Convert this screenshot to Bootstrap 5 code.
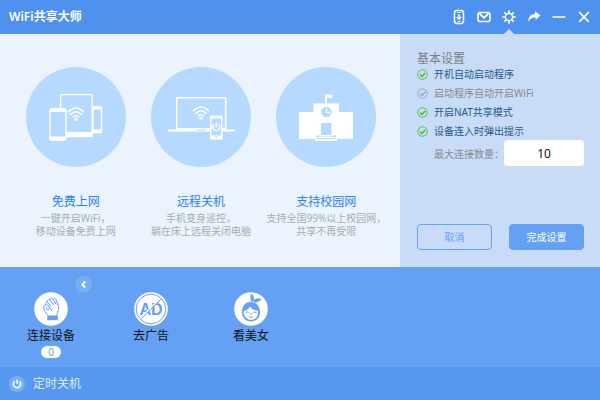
<!DOCTYPE html>
<html lang="zh-CN">
<head>
<meta charset="utf-8">
<meta name="viewport" content="width=device-width, initial-scale=1">
<title>WiFi共享大师</title>
<link rel="stylesheet" href="https://cdn.jsdelivr.net/npm/bootstrap@5.3.0/dist/css/bootstrap.min.css">
<style>
body{font-family:"Noto Sans","Noto Sans CJK SC",sans-serif;font-size:12px;line-height:16px;background:#64a1f4;color:#111}
svg{display:block}
.titlebar{background:#4f92ee;height:34px;padding:0 4px 0 9px}
.app-name{font-size:12px;line-height:16px;font-weight:600}
.tool{width:25px;height:34px}
.tool.active::after{content:"";position:absolute;left:50%;bottom:0;transform:translateX(-50%);border:5px solid transparent;border-top:0;border-bottom-color:#c9dcf7}
.stage{background:#ebf3fc}
.features{padding:33px 11px 28px 13px}
.disc{width:100px;height:100px;margin-bottom:27px}
.feature-title{font-size:12px;line-height:16px;font-weight:400;color:#2b82ee;margin-bottom:2px}
.feature-text{font-size:10px;line-height:13px;color:#aaadb0}
.settings{background:#c9dcf7;padding:17px 16px 17px 17px}
.settings-title{font-size:12px;line-height:16px;font-weight:400;color:#7b7f86}
.option{font-size:10px;line-height:15px;height:15px;margin-bottom:4px;color:#245a8c}
.option.off{color:#868b93}
.option .form-check-input{width:11px;height:11px;margin:0 6px 0 0;border:0;border-radius:50%;background:center/11px 11px no-repeat transparent}
.option .form-check-input,.option .form-check-input:checked{background-color:transparent}
.option .form-check-input{background-image:url("data:image/svg+xml,%3Csvg xmlns='http://www.w3.org/2000/svg' viewBox='0 0 11 11' fill='none' stroke='%239ca3ad'%3E%3Ccircle cx='5.5' cy='5.5' r='4.8'/%3E%3Cpath d='M3 5.5l2 2 3.2-3.6' stroke-width='1.5'/%3E%3C/svg%3E")}
.option .form-check-input:checked{background-image:url("data:image/svg+xml,%3Csvg xmlns='http://www.w3.org/2000/svg' viewBox='0 0 11 11' fill='none' stroke='%2344bd22'%3E%3Ccircle cx='5.5' cy='5.5' r='4.8'/%3E%3Cpath d='M3 5.5l2 2 3.2-3.6' stroke-width='1.5'/%3E%3C/svg%3E")}
.limit{padding-top:1px}
.limit-label{font-size:10px;line-height:15px;color:#868b93;padding-top:7px}
.limit-input{width:80px;height:26px;font-size:12px;line-height:16px;border-radius:4px;color:#111}
.action{width:75px;height:26px;font-size:10px;line-height:14px;border-radius:4px;border:1px solid #64a1f4}
.action-cancel,.action-cancel:hover{color:#64a1f4}
.action-ok,.action-ok:hover{background:#64a1f4;color:#fff}
.devices{min-height:100px;padding:25px 0 0 1px}
.device{width:100px;color:#111;font-size:12px;line-height:16px}
.device:hover{color:#111}
.device svg{margin-bottom:2px}
.count{width:20px;height:12px;margin-top:2px;font-size:10px;line-height:12px;color:#64a1f4}
.collapse-btn{left:75px;top:9px}
.statusbar{background:#5698f0;height:33px;padding:0 9px;color:#dfebfd}
.timer-btn{font-size:12px;line-height:16px}
</style>
</head>
<body class="d-flex flex-column min-vh-100">
<svg class="d-none" aria-hidden="true">
  <symbol id="wifi" viewBox="0 0 18 15">
    <g fill="none" stroke="#fff" stroke-width="1.6"><path d="M1 5.8Q9-2.8 17 5.8"/><path d="M3.5 8.3Q9 2.2 14.5 8.3"/><path d="M6 10.7Q9 7.2 12 10.7"/></g><circle cx="9" cy="12.8" r="1.7" fill="#fff"/>
  </symbol>
</svg>
<header class="titlebar d-flex align-items-center justify-content-between text-white">
  <h1 class="app-name mb-0">WiFi共享大师</h1>
  <nav class="d-flex" aria-label="窗口">
    <button type="button" class="tool btn p-0 border-0 rounded-0 d-flex align-items-center justify-content-center" aria-label="手机版">
      <svg width="16" height="16" viewBox="0 0 16 16" fill="none" stroke="#fff"><rect x="3.500" y="1.500" width="9" height="13" rx="2.400" stroke-width="1.500"/><path d="M6 3.500h4M6.500 12.500h3" stroke-width=".8"/><path d="M8 5v5M5.800 7.900L8 10.200l2.200-2.300" stroke-width="1.300"/></svg>
    </button>
    <button type="button" class="tool btn p-0 border-0 rounded-0 d-flex align-items-center justify-content-center" aria-label="消息">
      <svg width="16" height="16" viewBox="0 0 16 16" fill="none" stroke="#fff"><rect x="2" y="3.500" width="12" height="9" rx="2" stroke-width="1.600"/><path d="M3.500 4.500L8 8.800l4.500-4.300" stroke-width="1.800"/></svg>
    </button>
    <button type="button" class="tool active btn p-0 border-0 rounded-0 d-flex align-items-center justify-content-center position-relative" aria-label="设置">
      <svg width="16" height="16" viewBox="0 0 16 16" fill="none" stroke="#fff"><circle cx="8" cy="8" r="3.600" stroke-width="1.500"/><path d="M8 1.300v2.700M8 12v2.700M1.300 8H4M12 8h2.700M3.300 3.300l1.900 1.900M10.800 10.800l1.900 1.900M12.700 3.300l-1.900 1.900M5.200 10.800l-1.900 1.900" stroke-width="1.700"/></svg>
    </button>
    <button type="button" class="tool btn p-0 border-0 rounded-0 d-flex align-items-center justify-content-center" aria-label="分享">
      <svg width="16" height="16" viewBox="0 0 16 16" fill="#fff"><path d="M9 2.300l5.500 4.200L9.600 11V8.500C6.300 8.300 4 9.600 2.200 12.800 2.300 8 4.800 5.200 9 4.800z"/></svg>
    </button>
    <button type="button" class="tool btn p-0 border-0 rounded-0 d-flex align-items-center justify-content-center" aria-label="最小化">
      <svg width="16" height="16" viewBox="0 0 16 16" stroke="#fff" stroke-width="1.500"><path d="M1.500 8h13"/></svg>
    </button>
    <button type="button" class="tool btn p-0 border-0 rounded-0 d-flex align-items-center justify-content-center" aria-label="关闭">
      <svg width="16" height="16" viewBox="0 0 16 16" stroke="#fff" stroke-width="1.700"><path d="M3.200 3.200l9.600 9.600M12.800 3.200l-9.600 9.600"/></svg>
    </button>
  </nav>
</header>

<main class="stage row g-0 flex-grow-1">
  <section class="features col-8">
    <div class="row row-cols-3 g-0 text-center">
      <article class="col d-flex flex-column align-items-center">
        <svg class="disc" viewBox="0 0 100 100"><circle cx="50" cy="50" r="50" fill="#b6daff"/>
          <rect x="67" y="40" width="8.500" height="25.500" rx="1" fill="#b6daff" stroke="#fff" stroke-width="1.400"/><path d="M67 39.500h9v3h-9zM67 62.500h9v3h-9z" fill="#fff"/>
          <rect x="34.600" y="27.600" width="31.600" height="42" rx="1" fill="#b6daff" stroke="#fff" stroke-width="1.400"/><path d="M34 65h33v5H34z" fill="#fff"/>
          <rect x="24" y="42" width="16" height="31" rx="1.500" fill="#b6daff" stroke="#fff" stroke-width="1.400"/><path d="M23.300 45q0-3.500 2-3.700 6.700-1 13.300 0 2 .2 2 3.700zM23.300 69.500h17.300q0 3.500-2 3.700-6.600 1-13.300 0-2-.2-2-3.700z" fill="#fff"/>
          <use href="#wifi" x="41" y="39.500" width="18" height="15"/></svg>
        <h2 class="feature-title">免费上网</h2>
        <p class="feature-text text-nowrap mb-0">一键开启WiFi，<br>移动设备免费上网</p>
      </article>
      <article class="col d-flex flex-column align-items-center">
        <svg class="disc" viewBox="0 0 100 100"><circle cx="50" cy="50" r="50" fill="#b6daff"/>
          <rect x="25.700" y="30.700" width="49" height="31" rx="1" fill="none" stroke="#fff" stroke-width="1.600"/><path d="M17 62.500h67v2H17z" fill="#fff"/><path d="M46 62.500h9v1h-9z" fill="#b6daff"/>
          <use href="#wifi" x="41" y="38.500" width="18" height="15"/>
          <rect x="59" y="48.500" width="12.500" height="24" rx="1.500" fill="#fff"/><path d="M60.500 51.500h9.500v17h-9.500z" fill="#b6daff"/><circle cx="65.200" cy="70.600" r="1" fill="#b6daff"/><path d="M62.800 49.900h5" stroke="#b6daff" stroke-width=".6"/>
          <path d="M63 57.300a3.500 3.500 0 1 0 4.500 0M65.250 55.200v5" fill="none" stroke="#fff" stroke-width="1.400"/></svg>
        <h2 class="feature-title">远程关机</h2>
        <p class="feature-text text-nowrap mb-0">手机变身遥控，<br>躺在床上远程关闭电脑</p>
      </article>
      <article class="col d-flex flex-column align-items-center">
        <svg class="disc" viewBox="0 0 100 100"><circle cx="50" cy="50" r="50" fill="#b6daff"/>
          <path d="M49 27.500h7.500v3.500H51v5.500h12v8.500h14v27H23V45h14.500v-8.500H49z" fill="#fff"/>
          <circle cx="50.300" cy="45" r="5.200" fill="#b6daff"/><path d="M50.500 41v4.500h3.500" fill="none" stroke="#fff" stroke-width="1.200"/>
          <path d="M45 56h10.500v12.500H60V73H40.500v-4.500H45z" fill="#b6daff"/><path d="M45 68h10.500v1.500H45zM41.500 70h18v1H41.500zM39.500 72h21.500v2H39.500z" fill="#fff"/></svg>
        <h2 class="feature-title">支持校园网</h2>
        <p class="feature-text text-nowrap mb-0">支持全国99%以上校园网，<br>共享不再受限</p>
      </article>
    </div>
  </section>

  <form class="settings col-4 d-flex flex-column">
    <h2 class="settings-title mb-0">基本设置</h2>
    <div class="option d-flex align-items-center"><input class="form-check-input" type="checkbox" id="o1" checked><label for="o1">开机自动启动程序</label></div>
    <div class="option off d-flex align-items-center"><input class="form-check-input" type="checkbox" id="o2"><label for="o2">启动程序自动开启WiFi</label></div>
    <div class="option d-flex align-items-center"><input class="form-check-input" type="checkbox" id="o3" checked><label for="o3">开启NAT共享模式</label></div>
    <div class="option mb-0 d-flex align-items-center"><input class="form-check-input" type="checkbox" id="o4" checked><label for="o4">设备连入时弹出提示</label></div>
    <div class="limit d-flex align-items-start justify-content-end">
      <label class="limit-label text-nowrap" for="limit">最大连接数量：</label>
      <input class="limit-input form-control border-0 p-0 text-center" type="text" inputmode="numeric" id="limit" value="10">
    </div>
    <div class="d-flex justify-content-between mt-auto">
      <button type="button" class="action action-cancel btn p-0">取消</button>
      <button type="submit" class="action action-ok btn p-0">完成设置</button>
    </div>
  </form>
</main>

<section class="devices position-relative d-flex align-items-start">
  <a href="#" class="device d-flex flex-column align-items-center text-decoration-none">
    <svg width="34" height="34" viewBox="0 0 34 34"><circle cx="17" cy="17" r="16.800" fill="#fff"/>
      <g fill="none" stroke="#64a1f4" stroke-width="1" stroke-linejoin="round" stroke-linecap="round"><path d="M13.800 22.500C11 20.500 9.500 18 9.700 15.300c.2-2.500 3.600-3.200 5.200-1.200 1 1.600.3 3.900-1.300 3.900-1.300 0-1.500-1.600-.8-2.500"/><path d="M14.900 14.100c1.200 1.500 2 2.800 2.500 4.200M11.600 12.600c-.9-1.700.6-3 2-2l3 3M13.600 10.300c-1-2.400.8-3.600 2.300-2.300l3.600 4.500M16 7.800c.2-2 2-2.300 3-.9l3.200 5.300M19.300 7.300c.7-1.400 2.200-1.200 2.700.2l1.900 4.200c1.300 4 .8 8-1.400 11"/></g>
      <path d="M13.200 23.500h10.600v4.700H13.200z" fill="#64a1f4"/></svg>
    <span>连接设备</span>
    <span class="count bg-white rounded-pill text-center">0</span>
  </a>
  <a href="#" class="device d-flex flex-column align-items-center text-decoration-none">
    <svg width="34" height="34" viewBox="0 0 34 34"><circle cx="17" cy="17" r="16.800" fill="#fff"/><circle cx="17" cy="17" r="14.800" fill="none" stroke="#64a1f4"/>
      <text x="17" y="22.500" text-anchor="middle" font-family="Liberation Sans, sans-serif" font-weight="700" font-size="16" fill="#64a1f4">AD</text><path d="M6 26.500L26.500 6" stroke="#fff" stroke-width="1.300"/><path d="M6.500 27.500L27.500 6.500" stroke="#64a1f4" stroke-width="1"/></svg>
    <span>去广告</span>
  </a>
  <a href="#" class="device d-flex flex-column align-items-center text-decoration-none">
    <svg width="34" height="34" viewBox="0 0 34 34"><circle cx="17" cy="17" r="16.800" fill="#fff"/>
      <path d="M17.500 9.500c-1.600-2.500-1.500-5-.3-7.700 2.300 1.800 3.200 4 2.600 6.400 2-2 4.500-2.400 7.700-1.200-1.800 2.600-4.200 3.700-7.300 3.400 3.800 1.600 5.800 5 5.800 9.800 0 5.400-3.500 9.200-9 9.200s-9-3.800-9-9.200c0-6 3.200-10 9.500-10.700z" fill="#64a1f4"/>
      <path d="M9.700 19c2.800-.5 5-2 6.300-4.500 1.800 2.600 4.600 4 8.100 4.300.5 5.300-2.700 9-7.100 9s-7.800-3.800-7.300-8.800z" fill="#fff"/>
      <path d="M17.500 9.700l2.800.6" stroke="#fff" stroke-width=".9"/>
      <g fill="none" stroke="#64a1f4" stroke-linecap="round"><path d="M12 20.300q1.300-.8 2.600 0M19.400 20.300q1.300-.8 2.600 0M17 21.500v1.300M15 24.800q2 1.600 4 0"/></g></svg>
    <span>看美女</span>
  </a>
  <button type="button" class="collapse-btn btn p-0 border-0 position-absolute" aria-label="收起">
    <svg width="17" height="17" viewBox="0 0 17 17"><circle cx="8.500" cy="8.500" r="8.500" fill="#78adf6"/><path d="M10.200 5.500l-3 3 3 3" fill="none" stroke="#fff" stroke-width="1.800"/></svg>
  </button>
</section>

<footer class="statusbar d-flex align-items-center">
  <button type="button" class="timer-btn btn p-0 border-0 d-flex align-items-center gap-2 text-reset">
    <svg width="16" height="16" viewBox="0 0 16 16"><circle cx="8" cy="8" r="8" fill="#79aff5"/><path d="M5.600 5.200a3.700 3.700 0 1 0 4.800 0M8 3.800v4" fill="none" stroke="#fff" stroke-width="1.500"/></svg>
    <span>定时关机</span>
  </button>
</footer>
<script src="https://cdn.jsdelivr.net/npm/bootstrap@5.3.0/dist/js/bootstrap.bundle.min.js"></script>
</body>
</html>
